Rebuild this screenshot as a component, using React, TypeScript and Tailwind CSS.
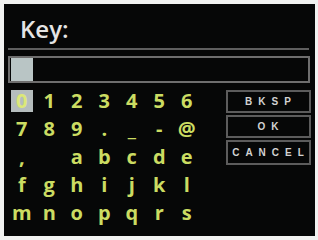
const rows = [
  ["0", "1", "2", "3", "4", "5", "6"],
  ["7", "8", "9", ".", "_", "-", "@"],
  [",", " ", "a", "b", "c", "d", "e"],
  ["f", "g", "h", "i", "j", "k", "l"],
  ["m", "n", "o", "p", "q", "r", "s"],
];

const buttons = ["BKSP", "OK", "CANCEL"];

export default function App() {
  return (
    <div className="w-[318px] h-[240px] bg-[#f1f2f1] pt-[4px] pl-[4px] overflow-hidden">
      <div className="w-[311px] h-[232px] bg-[#060707] flex flex-col font-['Open_Sans',sans-serif]">
        {/* Title */}
        <div className="mt-[13px] ml-[16px] h-[24px] text-[24px] leading-[24px] font-semibold text-[#e4e4e4]">
          Key:
        </div>

        {/* Separator */}
        <div className="mt-[7px] ml-[4px] w-[301px] h-[2px] bg-[#5e5e5e]" />

        {/* Input */}
        <div className="mt-[6px] ml-[4px] w-[302px] h-[27px] border-2 border-[#6e6e6e] pl-[1px] flex items-center">
          <div className="w-[22px] h-[23px] bg-[#b9c5c5]" />
        </div>

        {/* Keyboard */}
        <div className="flex">
          <div className="mt-[4px] ml-[4px] grid grid-cols-[repeat(7,27.5px)]">
            {rows.flat().map((ch, i) => (
              <div
                key={i}
                className="h-[28px] flex items-center justify-center text-[20px] leading-[28px] font-bold text-[#cbdc62]"
              >
                {i === 0 ? (
                  <span className="w-[22px] h-[22px] bg-[#b5bdbd] flex items-center justify-center text-[#dce878]">
                    {ch}
                  </span>
                ) : (
                  ch
                )}
              </div>
            ))}
          </div>

          <div className="mt-[7px] ml-[25px] w-[85px] flex flex-col gap-[2px]">
            {buttons.map((b, i) => (
              <div
                key={b}
                className={`${i === 2 ? "h-[25px]" : "h-[23px]"} border-2 border-[#5c5c5c] flex items-center justify-center font-['Liberation_Sans',sans-serif] text-[10px] font-bold tracking-[6px] pl-[6px] text-[#d2d2d2]`}
              >
                {b}
              </div>
            ))}
          </div>
        </div>
      </div>
    </div>
  );
}
